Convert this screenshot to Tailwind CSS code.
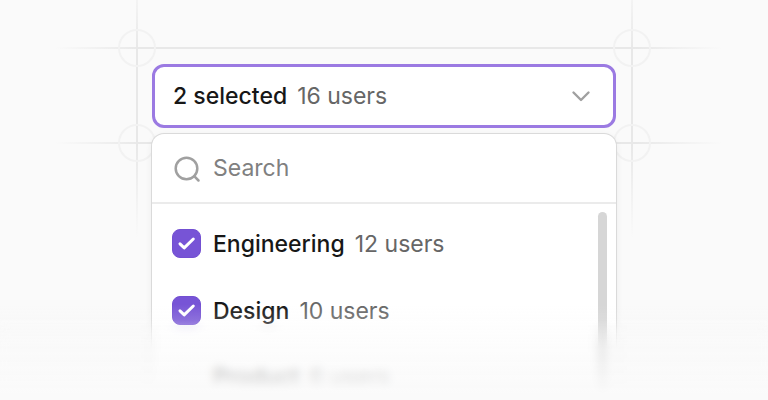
<!DOCTYPE html>
<html lang="en">
  <head>
    <meta charset="UTF-8" />
    <meta name="viewport" content="width=device-width, initial-scale=1.0" />
    <title>Select users</title>
    <script src="https://cdn.jsdelivr.net/npm/@tailwindcss/browser@4"></script>
  </head>
  <body class="bg-[#fafafa] font-['Inter',sans-serif] text-[23px] leading-9 text-[#171717]">
    <main class="relative h-screen overflow-hidden px-4 pt-16">
      <!-- guide lines behind the select -->
      <svg
        class="absolute top-0 left-1/2 h-60 w-[768px] -translate-x-1/2"
        viewBox="0 0 768 240"
        fill="none"
        aria-hidden="true"
      >
        <defs>
          <linearGradient id="fadeX" gradientUnits="userSpaceOnUse" x1="55" y1="0" x2="722" y2="0">
            <stop offset="0" stop-color="#e8e8e8" stop-opacity="0" />
            <stop offset="0.13" stop-color="#e8e8e8" />
            <stop offset="0.87" stop-color="#e8e8e8" />
            <stop offset="1" stop-color="#e8e8e8" stop-opacity="0" />
          </linearGradient>
          <linearGradient id="fadeY" gradientUnits="userSpaceOnUse" x1="0" y1="-30" x2="0" y2="238">
            <stop offset="0" stop-color="#e8e8e8" stop-opacity="0" />
            <stop offset="0.3" stop-color="#e8e8e8" />
            <stop offset="0.65" stop-color="#e8e8e8" />
            <stop offset="1" stop-color="#e8e8e8" stop-opacity="0" />
          </linearGradient>
        </defs>
        <g fill="url(#fadeX)">
          <rect x="55" y="47" width="667" height="2" />
          <rect x="55" y="142" width="667" height="2" />
        </g>
        <g fill="url(#fadeY)">
          <rect x="136" y="0" width="2" height="238" />
          <rect x="631" y="0" width="2" height="238" />
        </g>
        <g stroke="#f2f2f2" stroke-width="2">
          <circle cx="137" cy="48" r="18" />
          <circle cx="632" cy="48" r="18" />
          <circle cx="137" cy="143" r="18" />
          <circle cx="632" cy="143" r="18" />
        </g>
      </svg>

      <div class="relative mx-auto w-full max-w-[464px]">
        <button
          type="button"
          aria-expanded="true"
          aria-controls="groups"
          class="flex h-16 w-full items-center gap-2.5 rounded-xl border-3 border-[#9b7ae2] bg-white px-[18px]"
        >
          <span class="font-medium">2 selected</span>
          <span class="text-[#666]">16 users</span>
          <svg
            class="ml-auto size-7"
            viewBox="0 0 28 28"
            fill="none"
            stroke="#a0a0a0"
            stroke-width="2.4"
            stroke-linecap="round"
            stroke-linejoin="round"
            aria-hidden="true"
          >
            <path d="M6.5 10.5l7.5 7.5 7.5-7.5" />
          </svg>
        </button>

        <div
          id="groups"
          class="mt-1.5 rounded-xl bg-white shadow-[0_0_0_1px_#dadada,0_2px_6px_1px_rgb(0_0_0/0.06)]"
        >
          <label class="flex h-[70px] items-center gap-3 border-b-2 border-[#ebebeb] px-5">
            <svg
              class="size-[29px] shrink-0"
              viewBox="0 0 29 29"
              fill="none"
              stroke="#a0a0a0"
              stroke-width="2.5"
              stroke-linecap="round"
              aria-hidden="true"
            >
              <circle cx="14.5" cy="14.5" r="10.8" />
              <path d="M22.2 22.2l4.3 4.3" />
            </svg>
            <input
              type="text"
              placeholder="Search"
              aria-label="Search"
              class="h-12 min-w-0 flex-1 outline-none placeholder:text-[#808080]"
            />
          </label>

          <div class="flex justify-between">
            <ul class="pt-1.5 pl-5">
              <li>
                <label class="flex h-[67px] items-center gap-3">
                  <span class="grid size-[29px]">
                    <input
                      type="checkbox"
                      checked
                      class="col-start-1 row-start-1 appearance-none rounded-lg border border-[#ddd] checked:border-[#7350d2] checked:bg-[#7754d6]"
                    />
                    <svg
                      class="pointer-events-none col-start-1 row-start-1"
                      viewBox="0 0 29 29"
                      fill="none"
                      stroke="white"
                      stroke-width="3"
                      stroke-linecap="round"
                      stroke-linejoin="round"
                      aria-hidden="true"
                    >
                      <path d="M8 14.8l4.2 4L21.3 10" />
                    </svg>
                  </span>
                  <span class="flex gap-2.5">
                    <span class="font-medium">Engineering</span>
                    <span class="text-[#666]">12 users</span>
                  </span>
                </label>
              </li>
              <li>
                <label class="flex h-[67px] items-center gap-3">
                  <span class="grid size-[29px]">
                    <input
                      type="checkbox"
                      checked
                      class="col-start-1 row-start-1 appearance-none rounded-lg border border-[#ddd] checked:border-[#7350d2] checked:bg-[#7754d6]"
                    />
                    <svg
                      class="pointer-events-none col-start-1 row-start-1"
                      viewBox="0 0 29 29"
                      fill="none"
                      stroke="white"
                      stroke-width="3"
                      stroke-linecap="round"
                      stroke-linejoin="round"
                      aria-hidden="true"
                    >
                      <path d="M8 14.8l4.2 4L21.3 10" />
                    </svg>
                  </span>
                  <span class="flex gap-2.5">
                    <span class="font-medium">Design</span>
                    <span class="text-[#666]">10 users</span>
                  </span>
                </label>
              </li>
              <li>
                <label class="flex h-[67px] items-center gap-3">
                  <input
                    type="checkbox"
                    class="size-[29px] appearance-none rounded-lg border border-[#eee]"
                  />
                  <span class="flex gap-2.5">
                    <span class="font-medium">Product</span>
                    <span class="text-[#666]">6 users</span>
                  </span>
                </label>
              </li>
            </ul>

            <!-- scrollbar -->
            <div class="flex py-2 pr-[9px]" aria-hidden="true">
              <div class="w-[9px] rounded-full bg-[#d6d6d6]"></div>
            </div>
          </div>
        </div>
      </div>

      <!-- fade and blur towards the bottom edge -->
      <div
        class="pointer-events-none absolute inset-x-0 bottom-0 h-20 backdrop-blur-[5px] [mask-image:linear-gradient(to_bottom,transparent,black_35%)]"
      ></div>
      <div
        class="pointer-events-none absolute inset-x-0 bottom-0 h-24 bg-linear-to-b from-[#fafafa]/0 via-[#fafafa]/45 via-45% to-[#fafafa] to-95%"
      ></div>
    </main>
  </body>
</html>
